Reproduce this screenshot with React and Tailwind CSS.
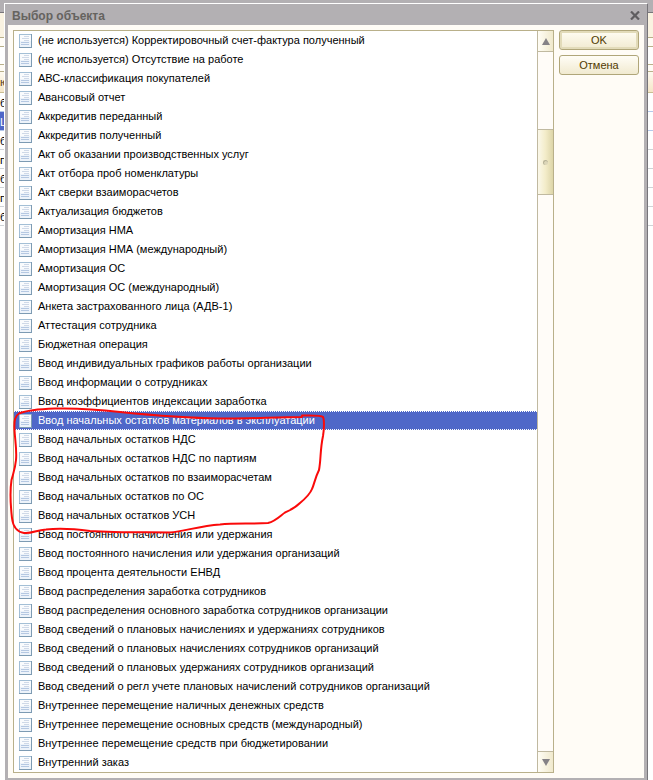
import { useState } from "react";

const items = [
  "(не используется) Корректировочный счет-фактура полученный",
  "(не используется) Отсутствие на работе",
  "АВС-классификация покупателей",
  "Авансовый отчет",
  "Аккредитив переданный",
  "Аккредитив полученный",
  "Акт об оказании производственных услуг",
  "Акт отбора проб номенклатуры",
  "Акт сверки взаиморасчетов",
  "Актуализация бюджетов",
  "Амортизация НМА",
  "Амортизация НМА (международный)",
  "Амортизация ОС",
  "Амортизация ОС (международный)",
  "Анкета застрахованного лица (АДВ-1)",
  "Аттестация сотрудника",
  "Бюджетная операция",
  "Ввод индивидуальных графиков работы организации",
  "Ввод информации о сотрудниках",
  "Ввод коэффициентов индексации заработка",
  "Ввод начальных остатков материалов в эксплуатации",
  "Ввод начальных остатков НДС",
  "Ввод начальных остатков НДС по партиям",
  "Ввод начальных остатков по взаиморасчетам",
  "Ввод начальных остатков по ОС",
  "Ввод начальных остатков УСН",
  "Ввод постоянного начисления или удержания",
  "Ввод постоянного начисления или удержания организаций",
  "Ввод процента деятельности ЕНВД",
  "Ввод распределения заработка сотрудников",
  "Ввод распределения основного заработка сотрудников организации",
  "Ввод сведений о плановых начислениях и удержаниях сотрудников",
  "Ввод сведений о плановых начислениях сотрудников организаций",
  "Ввод сведений о плановых удержаниях сотрудников организаций",
  "Ввод сведений о регл учете плановых начислений сотрудников организаций",
  "Внутреннее перемещение наличных денежных средств",
  "Внутреннее перемещение основных средств (международный)",
  "Внутреннее перемещение средств при бюджетировании",
  "Внутренний заказ",
];

function DocIcon() {
  return (
    <svg width="13" height="14" viewBox="0 0 13 14" shapeRendering="crispEdges" aria-hidden="true" className="shrink-0">
      <rect width="13" height="14" fill="#7d9bb3" />
      <rect width="12" height="13" fill="#a3bfd6" />
      <rect x="1" y="1" width="11" height="12" fill="#f9fbfd" />
      <rect x="1" y="7" width="11" height="6" fill="#edf3fa" />
      <path d="M5 2.5h5M3 4.5h7M5 6.5h5" stroke="#cfd9e8" />
      <path d="M2 8.5h8M2 10.5h8" stroke="#b5c8e2" />
    </svg>
  );
}

/* Edges of the window that lies behind the dialog */
function BackWindow({ cells, selected }) {
  return (
    <div className="flex flex-col overflow-hidden bg-white" aria-hidden="true">
      <div className="h-[13px] shrink-0 border-b border-[#77757a] bg-[#b3b0b3]" />
      <div className="h-[25px] shrink-0 border-b border-[#b9b08a] bg-[#faf3e1]" />
      <div className="h-[9px] shrink-0 border-b border-[#b9b08a] bg-[#fffcf6]" />
      <div className="h-[18px] shrink-0 border-b border-[#b9b08a] bg-white" />
      <div className="h-[7px] shrink-0 border-b border-[#b9b08a] bg-[#fffcf6]" />
      <div className="h-[21px] shrink-0 border-b border-[#c9bd92] bg-linear-to-b from-[#fefaf0] to-[#f5e6c8] leading-5 text-[#5a4010]">
        {cells[0]}
      </div>
      {cells.slice(1).map((cell, i) => (
        <div
          key={i}
          className={
            "h-[19px] shrink-0 border-b leading-5 " +
            (i === 1 && selected
              ? "border-[#b4c8ea] bg-[#4f67c8] text-white"
              : i < 2
                ? "border-[#b4c8ea]"
                : "border-[#cfd3d6]")
          }
        >
          {cell}
        </div>
      ))}
    </div>
  );
}

function Arrow({ down }) {
  return (
    <svg width="8" height="7" viewBox="0 0 8 7" aria-hidden="true">
      <path d={down ? "M0 0h8L4 7z" : "M4 0l4 7H0z"} fill="#858286" />
    </svg>
  );
}

export default function App() {
  const [selected, setSelected] = useState(20);

  return (
    <div className="relative grid grid-cols-[4px_minmax(0,1fr)_5px] bg-white font-['Liberation_Sans',sans-serif] text-[11px] text-black">
      <BackWindow cells={["ю", "б", "Ц", "б", "п", "б", "п", "б"]} selected />

      <div className="bg-[#b3b0b3] pt-[3px]">
        <section
          role="dialog"
          aria-labelledby="title"
          className="border-t border-r border-l border-t-white border-r-[#77757a] border-l-white px-[3px] pb-[2px]"
        >
          <header className="flex h-[21px] items-center justify-between pt-[2px] pr-[4px] pl-1">
            <h1 id="title" className="text-xs font-bold text-[#65635f]">
              Выбор объекта
            </h1>
            <button type="button" aria-label="Закрыть" className="p-0">
              <svg width="10" height="9" viewBox="0 0 10 9" aria-hidden="true" className="block">
                <path d="M1 0.5l8 8M9 0.5l-8 8" stroke="#5f5d60" strokeWidth="2.2" />
              </svg>
            </button>
          </header>

          <div className="flex items-start gap-[5px] bg-[#fffcf6] p-[5px]">
            <div className="flex min-w-0 flex-1 border border-[#b9b08a] bg-white">
              <ul role="listbox" aria-label="Выбор объекта" className="min-w-0 flex-1">
                {items.map((item, i) => (
                  <li
                    key={item}
                    role="option"
                    aria-selected={i === selected}
                    onClick={() => setSelected(i)}
                    className={
                      "flex h-[19px] items-center gap-[6px] border-y border-dotted pl-[5px] whitespace-nowrap " +
                      (i === selected ? "border-white bg-[#4f67c8] text-white" : "border-transparent")
                    }
                  >
                    <DocIcon />
                    <span className="leading-[17px]">{item}</span>
                  </li>
                ))}
              </ul>
              <div className="flex w-4 shrink-0 flex-col border-l border-[#c0b9a0] bg-[#fffcf8]">
                <button
                  type="button"
                  aria-label="Вверх"
                  className="flex h-[21px] items-center justify-center border-b border-[#c0b9a0] bg-linear-to-r from-[#fffdf5] to-[#f0e9cd]"
                >
                  <Arrow />
                </button>
                <div className="flex-[77]" />
                <div className="flex h-[66px] items-center justify-center border-y border-[#c0b9a0] bg-linear-to-r from-[#fbf8ea] via-[#f3ecc9] to-[#ddd5a8]">
                  <span className="size-[5px] rounded-full border-t border-l border-[#b5b196] bg-[#dcd6b8]" />
                </div>
                <div className="flex-[556]" />
                <button
                  type="button"
                  aria-label="Вниз"
                  className="flex h-[21px] items-center justify-center border-t border-[#c0b9a0] bg-linear-to-r from-[#fffdf5] to-[#f0e9cd]"
                >
                  <Arrow down />
                </button>
              </div>
            </div>

            <div className="flex w-20 shrink-0 flex-col gap-[5px]">
              <button
                type="button"
                className="h-5 rounded-[3px] border border-[#b0a679] bg-linear-to-b from-[#fffdf3] to-[#f1ead0] leading-4 text-[#513a00] inset-ring-2 inset-ring-[#e2dbb9]"
              >
                OK
              </button>
              <button
                type="button"
                className="h-5 rounded-[3px] border border-[#b0a679] bg-linear-to-b from-[#fffdf6] to-[#f1ead0] leading-4 text-[#513a00]"
              >
                Отмена
              </button>
            </div>
          </div>
        </section>
      </div>

      <BackWindow cells={["", "", "", "", "", "", "", ""]} />

      {/* Hand-drawn marker around the opening-balance documents */}
      <svg
        width="330"
        height="140"
        viewBox="0 400 330 140"
        aria-hidden="true"
        className="pointer-events-none absolute top-[400px] left-0"
      >
        <path
          d="M302 417C275 417 250 419 220 418.500C185 418 150 415 120 412C95 409 75 408 55 408.500C40 409 25 411 19 413.500C15 416 14 420 14.500 430C15 440 17 450 16 460C15 470 13 474 11.500 480C10 490 10.500 505 12 518C13 527 18 532 24 533C32 534 36 530 46 529.500C60 528 75 529 90 531C120 533 150 532 170 532.500C185 531 200 526 220 524.500C235 523 250 524 268 523C276 521 281 515 285 512.500C288 511 294 509 300 503C306 498 310 494 312 489C314 485 315 478 319 470C321 460 320 450 323 436C324 430 324.500 420 323 417C321 415 312 415.500 302 415.500"
          fill="none"
          stroke="#fa0a0a"
          strokeWidth="2"
          strokeLinejoin="round"
          strokeLinecap="round"
        />
      </svg>
    </div>
  );
}
